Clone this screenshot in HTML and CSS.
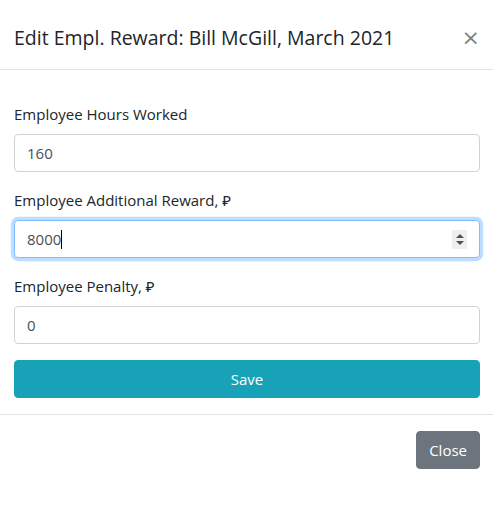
FILE: index.html
```html
<!DOCTYPE html>
<html lang="en">
<head>
<meta charset="utf-8">
<title>Edit Employee Reward</title>
<link rel="stylesheet" href="styles.css">
</head>
<body>
<div class="modal">
  <div class="modal-header">
    <h5 class="modal-title">Edit Empl. Reward: Bill McGill, March 2021</h5>
    <button type="button" class="close" aria-label="Close">×</button>
  </div>
  <div class="modal-body">
    <form class="form">
      <div class="form-group">
        <label class="label">Employee Hours Worked</label>
        <div class="form-control">160</div>
      </div>
      <div class="form-group">
        <label class="label">Employee Additional Reward, ₽</label>
        <div class="form-control focused">8000<span class="caret"></span>
          <span class="spinner"><span class="tri up"></span><span class="tri down"></span></span>
        </div>
      </div>
      <div class="form-group">
        <label class="label">Employee Penalty, ₽</label>
        <div class="form-control">0</div>
      </div>
      <button type="button" class="btn btn-info btn-block">Save</button>
    </form>
  </div>
  <div class="modal-footer">
    <button type="button" class="btn btn-secondary">Close</button>
  </div>
</div>
</body>
</html>
```
FILE: styles.css
```css
* { box-sizing: border-box; }
html, body { margin: 0; padding: 0; background: #fff; }
body {
  font-family: "Open Sans", "Noto Sans", sans-serif;
  font-size: 15px;
  line-height: 24px;
  color: #212529;
}
.modal { padding-top: 7px; width: 493px; }
.modal-header {
  display: flex;
  align-items: flex-start;
  justify-content: space-between;
  padding: 16px 13px 16px 14px;
  border-bottom: 1px solid #dee2e6;
}
.modal-title {
  margin: 0;
  font-size: 19.5px;
  line-height: 30px;
  font-weight: 500;
  color: #212529;
}
.close {
  padding: 16px;
  margin: -16px -16px -16px auto;
  background: transparent;
  border: 0;
  font-family: "DejaVu Sans", sans-serif;
  font-size: 22px;
  font-weight: 400;
  line-height: 30px;
  color: #000;
  opacity: .5;
  text-shadow: 0 1px 0 #fff;
  cursor: pointer;
}
.modal-body { padding: 32px 13px 16px 14px; }
.form { display: flex; flex-direction: column; }
.form-group { display: flex; flex-direction: column; margin-bottom: 16px; }
.label { margin-bottom: 8px; display: block; }
.form-control {
  position: relative;
  height: 38px;
  padding: 6px 12px;
  border: 1px solid #ced4da;
  border-radius: 4px;
  color: #495057;
  background: #fff;
  display: flex;
  align-items: center;
}
.form-control.focused {
  border-color: #80bdff;
  box-shadow: 0 0 0 3.2px rgba(0, 123, 255, .25);
}
.caret {
  display: inline-block;
  width: 1px;
  height: 19px;
  background: #000;
}
.spinner {
  position: absolute;
  right: 12px;
  top: 9px;
  width: 15px;
  height: 19px;
  background: #efefef;
  display: flex;
  flex-direction: column;
  align-items: center;
  justify-content: center;
  gap: 3px;
}
.tri { width: 0; height: 0; border-left: 4px solid transparent; border-right: 4px solid transparent; }
.tri.up { border-bottom: 4px solid #505050; }
.tri.down { border-top: 4px solid #505050; }
.btn {
  font-family: inherit;
  font-size: 15px;
  line-height: 24px;
  padding: 6px 12px;
  border: 1px solid transparent;
  border-radius: 4px;
  color: #fff;
  cursor: pointer;
}
.btn-info { background: #17a2b8; border-color: #17a2b8; }
.btn-block { display: block; width: 100%; }
.btn-secondary { background: #6c757d; border-color: #6c757d; margin: 4px; }
.modal-footer {
  display: flex;
  justify-content: flex-end;
  align-items: center;
  padding: 12px 9px 12px 12px;
  border-top: 1px solid #dee2e6;
}
```
